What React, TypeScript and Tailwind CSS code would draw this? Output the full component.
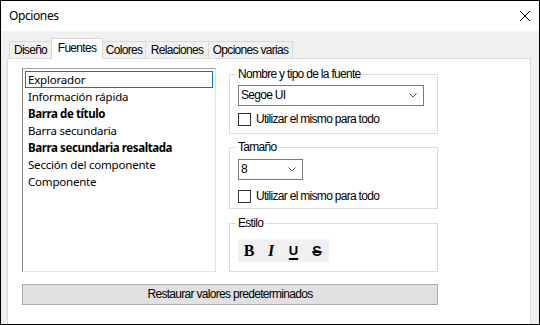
const ui = "font-['Liberation_Sans',Arial,sans-serif] text-[12px] tracking-[-0.7px] text-black";

const tabs = [
  { label: "Diseño", w: "w-[43px]" },
  { label: "Fuentes", w: "w-[52px]", active: true },
  { label: "Colores", w: "w-[44px]" },
  { label: "Relaciones", w: "w-[64px]" },
  { label: "Opciones varias", w: "w-[85px]" },
];

const items = [
  { label: "Explorador", focus: true },
  { label: "Información rápida" },
  { label: "Barra de título", bold: true },
  { label: "Barra secundaria" },
  { label: "Barra secundaria resaltada", bold: true },
  { label: "Sección del componente" },
  { label: "Componente" },
];

function GroupBox({ label, className, children }: { label: string; className: string; children: React.ReactNode }) {
  return (
    <div className={`relative border border-[#dcdcdc] px-[8px] ${className}`}>
      <span className="absolute left-[6px] top-[-7px] bg-white px-[2px] leading-[13px]">{label}</span>
      {children}
    </div>
  );
}

function Combo({ value, w }: { value: string; w: string }) {
  return (
    <div className={`flex h-[21px] items-center justify-between border border-[#7a7a7a] bg-white pl-[2px] pr-[6px] ${w}`}>
      <span className="leading-[13px]">{value}</span>
      <svg width="8" height="5" viewBox="0 0 8 5">
        <path d="M0.5 0.5 L4 4 L7.5 0.5" fill="none" stroke="#555" strokeWidth="1" />
      </svg>
    </div>
  );
}

function Check({ className }: { className: string }) {
  return (
    <div className={`flex h-[14px] items-center gap-[5px] ${className}`}>
      <div className="h-[13px] w-[13px] border border-[#333] bg-white" />
      <span className="leading-[13px]">Utilizar el mismo para todo</span>
    </div>
  );
}

export default function App() {
  return (
    <div className={`flex h-[325px] w-[540px] flex-col border border-black bg-[#f0f0f0] ${ui}`}>
      {/* title bar */}
      <div className="flex h-[30px] shrink-0 items-center justify-between bg-white pl-[8px] pr-[9px]">
        <span className="font-['Noto_Sans',sans-serif] text-[12px] tracking-[-0.4px]">Opciones</span>
        <svg width="10" height="10" viewBox="0 0 10 10">
          <path d="M0 0 L10 10 M10 0 L0 10" stroke="#000" strokeWidth="1" />
        </svg>
      </div>

      <div className="flex flex-1 flex-col pl-[6px] pr-[8px] pt-[7px]">
        {/* tabs */}
        <div className="ml-[2px] flex h-[20px] items-end">
          {tabs.map((t, i) => (
            <div
              key={t.label}
              className={`flex items-center justify-center border border-b-0 border-[#d9d9d9] leading-[13px] ${t.w} ${i > 0 ? "-ml-px" : ""} ${
                t.active ? "relative z-10 -mb-px h-[21px] bg-white pb-[2px]" : "h-[17px] bg-[#f0f0f0]"
              }`}
            >
              {t.label}
            </div>
          ))}
        </div>

        {/* panel */}
        <div className="flex flex-1 flex-col border border-b-0 border-[#d9d9d9] bg-white pl-[14px] pt-[9px]">
          <div className="flex items-start gap-[13px]">
            <div className="h-[204px] w-[194px] border border-b-[#e3e3e3] border-l-[#828282] border-r-[#e3e3e3] border-t-[#a0a0a0] bg-white px-[2px] pt-[2px] font-['Noto_Sans',sans-serif] text-[11.5px]">
              {items.map((it) => (
                <div
                  key={it.label}
                  className={`h-[17px] border pl-[2px] leading-[15px] ${it.focus ? "border-[#0078d7]" : "border-transparent"} ${
                    it.bold ? "font-bold tracking-[-0.4px]" : "tracking-[-0.2px]"
                  }`}
                >
                  {it.label}
                </div>
              ))}
            </div>

            <div className="flex w-[209px] flex-col pt-[6px]">
              <GroupBox label="Nombre y tipo de la fuente" className="pb-[7px] pt-[10px]">
                <Combo value="Segoe UI" w="w-[186px]" />
                <Check className="mt-[6px]" />
              </GroupBox>

              <GroupBox label="Tamaño" className="mt-[13px] pb-[5px] pt-[11px]">
                <Combo value="8" w="w-[65px]" />
                <Check className="mt-[9px]" />
              </GroupBox>

              <GroupBox label="Estilo" className="mt-[14px] pb-[9px] pt-[15px]">
                <div className="flex h-[23px] w-[91px] items-center bg-[#f0f0f0] tracking-normal">
                  <span className="w-[22px] pt-[1px] text-center font-['Liberation_Serif',serif] text-[16px] font-bold leading-none">B</span>
                  <span className="w-[22px] pt-[1px] text-center font-['Liberation_Serif',serif] text-[16px] font-bold italic leading-none">I</span>
                  <span className="w-[23px] text-center font-['Liberation_Sans',sans-serif] text-[13px] font-bold leading-none underline decoration-2 underline-offset-[3px]">U</span>
                  <span className="w-[24px] text-center font-['Liberation_Sans',sans-serif] text-[14px] font-bold leading-none line-through decoration-2">S</span>
                </div>
              </GroupBox>
            </div>
          </div>

          <button className="mt-[12px] h-[21px] w-[416px] border border-[#adadad] bg-[#e1e1e1] leading-[13px]">
            Restaurar valores predeterminados
          </button>
        </div>
      </div>
    </div>
  );
}
